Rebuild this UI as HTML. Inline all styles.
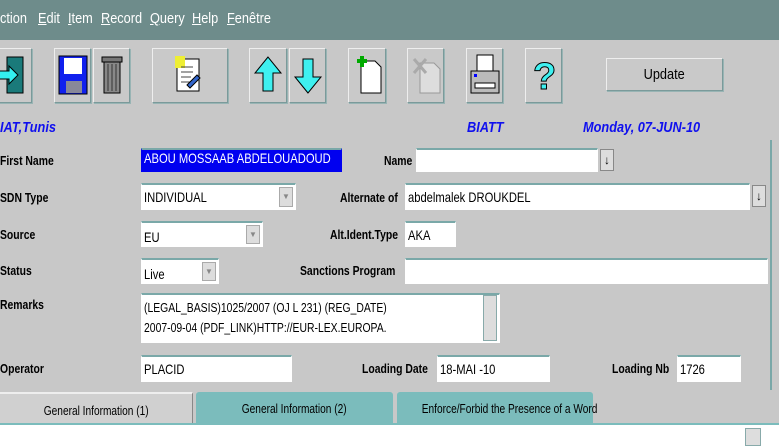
<!DOCTYPE html>
<html><head><style>
*{margin:0;padding:0;box-sizing:border-box}
html,body{width:779px;height:446px;overflow:hidden}
body{background:#c8c8c8;font-family:"Liberation Sans",sans-serif;position:relative}
.a{position:absolute}
.menu{left:0;top:0;width:779px;height:40px;background:#6e8c8b}
.menu span{position:absolute;top:10px;font-size:15px;color:#fff;transform:scaleX(.85);transform-origin:left}
.btn{position:absolute;top:48px;height:55px;background:#c9c9c9;border:1px solid #eee;border-right-color:#7a9a9a;border-bottom-color:#7a9a9a;box-shadow:1px 1px 0 #98b4b4}
.lbl{position:absolute;font-size:13px;font-weight:bold;color:#000;transform:scaleX(.8);transform-origin:left;white-space:nowrap}
.f{position:absolute;background:#fff;border:1px solid #fff;border-top:2px solid #7aa8a8;font-size:14px;padding-left:2px;white-space:nowrap;overflow:hidden}
.f span{display:inline-block;transform:scaleX(.8);transform-origin:left}
.dd{position:absolute;top:2px;right:2px;width:14px;bottom:2px;background:#ddd;border:1px solid #aaa;color:#888;font-size:8px;text-align:center;line-height:18px}
.blue{position:absolute;top:119px;color:#1010ee;font-weight:bold;font-style:italic;font-size:15px;transform:scaleX(.85);transform-origin:left;white-space:nowrap}
.tab{position:absolute;top:392px;height:31px;font-size:13px;text-align:center;line-height:34px;white-space:nowrap;overflow:visible}
.tab span{display:inline-block;transform:scaleX(.78);white-space:nowrap}
.lov{position:absolute;width:14px;height:22px;background:#ddd;border:1px solid #888;font-size:12px;text-align:center;line-height:20px;font-weight:bold}
</style></head><body>
<div class="a menu">
<span style="left:0">ction</span><span style="left:38px"><u>E</u>dit</span><span style="left:68px"><u>I</u>tem</span><span style="left:101px"><u>R</u>ecord</span><span style="left:150px"><u>Q</u>uery</span><span style="left:192px"><u>H</u>elp</span><span style="left:227px"><u>F</u>enêtre</span>
</div>
<div class="btn" style="left:-2px;width:34px"><svg width="32" height="52" viewBox="0 0 32 52"><rect x="8" y="8" width="16" height="36" fill="#1a7a7a" stroke="#000"/><path d="M0 22h10v-5l9 9-9 9v-5H0z" fill="#3ee" stroke="#000"/></svg></div>
<div class="btn" style="left:54px;width:37px"><svg width="36" height="52" viewBox="0 0 36 52"><rect x="4" y="7" width="28" height="38" fill="#1020ee" stroke="#000"/><rect x="9" y="9" width="18" height="16" fill="#fff"/><rect x="11" y="32" width="16" height="12" fill="#889"/></svg></div>
<div class="btn" style="left:93px;width:37px"><svg width="36" height="52" viewBox="0 0 36 52"><rect x="10" y="12" width="16" height="32" fill="#888" stroke="#000"/><rect x="8" y="8" width="20" height="5" fill="#777" stroke="#000"/><path d="M14 15v27M18 15v27M22 15v27" stroke="#333"/></svg></div>
<div class="btn" style="left:152px;width:76px"><svg width="76" height="52" viewBox="0 0 76 52"><rect x="24" y="10" width="22" height="32" fill="#fff" stroke="#000"/><rect x="22" y="7" width="10" height="12" fill="#ee3"/><path d="M28 18h12M28 23h12M28 28h10M28 33h12" stroke="#444"/><path d="M34 36l10-10 3 3-10 10z" fill="#36c" stroke="#000"/></svg></div>
<div class="btn" style="left:249px;width:38px"><svg width="36" height="52" viewBox="0 0 36 52"><path d="M18 8L5 24h8v18h10V24h8z" fill="#3ef0f0" stroke="#000"/></svg></div>
<div class="btn" style="left:289px;width:37px"><svg width="36" height="52" viewBox="0 0 36 52"><path d="M18 44L5 28h8V10h10v18h8z" fill="#3ef0f0" stroke="#000"/></svg></div>
<div class="btn" style="left:348px;width:38px"><svg width="36" height="52" viewBox="0 0 36 52"><path d="M12 12h14l6 6v26H12z" fill="#fff" stroke="#000"/><path d="M8 12h10M13 7v11" stroke="#0a0" stroke-width="4"/></svg></div>
<div class="btn" style="left:407px;width:37px"><svg width="36" height="52" viewBox="0 0 36 52"><path d="M12 14h14l6 6v24H12z" fill="#ddd" stroke="#999"/><path d="M6 10l12 14M18 10L6 24" stroke="#aaa" stroke-width="3"/></svg></div>
<div class="btn" style="left:466px;width:37px"><svg width="36" height="52" viewBox="0 0 36 52"><rect x="10" y="6" width="16" height="16" fill="#fff" stroke="#000"/><rect x="4" y="22" width="28" height="22" fill="#bbb" stroke="#000"/><rect x="8" y="34" width="20" height="5" fill="#fff" stroke="#000"/><rect x="7" y="25" width="3" height="3" fill="#00f"/></svg></div>
<div class="btn" style="left:525px;width:37px"><svg width="36" height="52" viewBox="0 0 36 52"><text x="7" y="40" font-size="38" font-family="Liberation Sans" font-weight="bold" fill="#3ef0f0" stroke="#000" stroke-width="1">?</text></svg></div>
<div class="btn" style="left:606px;top:58px;width:117px;height:33px;text-align:center;line-height:31px;font-size:15px"><span style="display:inline-block;transform:scaleX(.85)">Update</span></div>
<div class="blue" style="left:0">IAT,Tunis</div>
<div class="blue" style="left:467px">BIATT</div>
<div class="blue" style="left:583px">Monday, 07-JUN-10</div>
<div class="a" style="left:770px;top:140px;width:2px;height:250px;background:#7aa8a8"></div>

<div class="lbl" style="left:0;top:153px">First Name</div>
<div class="f" style="left:141px;top:148px;width:201px;height:24px;background:#0000f0;color:#fff;border-color:#0000f0;border-top-color:#7aa8a8"><span>ABOU MOSSAAB ABDELOUADOUD</span></div>
<div class="lbl" style="left:384px;top:153px">Name</div>
<div class="f" style="left:416px;top:148px;width:182px;height:24px"></div>
<div class="lov" style="left:600px;top:149px">↓</div>

<div class="lbl" style="left:0;top:190px">SDN Type</div>
<div class="f" style="left:141px;top:183px;width:155px;height:27px;line-height:24px"><span>INDIVIDUAL</span><div class="dd">▼</div></div>
<div class="lbl" style="left:340px;top:190px">Alternate of</div>
<div class="f" style="left:405px;top:183px;width:345px;height:27px;line-height:24px"><span>abdelmalek DROUKDEL</span></div>
<div class="lov" style="left:752px;top:185px">↓</div>

<div class="lbl" style="left:0;top:227px">Source</div>
<div class="f" style="left:141px;top:221px;width:122px;height:26px;line-height:28px"><span>EU</span><div class="dd">▼</div></div>
<div class="lbl" style="left:330px;top:227px">Alt.Ident.Type</div>
<div class="f" style="left:405px;top:221px;width:51px;height:26px;line-height:24px"><span>AKA</span></div>

<div class="lbl" style="left:0;top:263px">Status</div>
<div class="f" style="left:141px;top:258px;width:78px;height:26px;line-height:28px"><span>Live</span><div class="dd">▼</div></div>
<div class="lbl" style="left:300px;top:263px">Sanctions Program</div>
<div class="f" style="left:405px;top:258px;width:363px;height:26px"></div>

<div class="lbl" style="left:0;top:297px">Remarks</div>
<div class="f" style="left:141px;top:293px;width:359px;height:50px;font-size:13px;line-height:20px;padding-top:3px"><span>(LEGAL_BASIS)1025/2007 (OJ L 231) (REG_DATE)</span><br><span>2007-09-04 (PDF_LINK)HTTP://EUR-LEX.EUROPA.</span>
<div class="a" style="left:341px;top:0;width:14px;height:46px;background:#ddd;border:1px solid #8aa"></div></div>

<div class="lbl" style="left:0;top:361px">Operator</div>
<div class="f" style="left:141px;top:355px;width:151px;height:27px;line-height:24px"><span>PLACID</span></div>
<div class="lbl" style="left:362px;top:361px">Loading Date</div>
<div class="f" style="left:437px;top:355px;width:113px;height:27px;line-height:24px"><span>18-MAI -10</span></div>
<div class="lbl" style="left:612px;top:361px">Loading Nb</div>
<div class="f" style="left:677px;top:355px;width:64px;height:27px;line-height:24px"><span>1726</span></div>

<div class="tab" style="left:0;width:193px;background:#d0d0d0;border-top:2px solid #eee;border-right:1px solid #888"><span>General Information (1)</span></div>
<div class="tab" style="left:196px;width:197px;background:#7bbcbc;border-radius:3px 3px 0 0"><span>General Information (2)</span></div>
<div class="tab" style="left:397px;width:196px;background:#7bbcbc;border-radius:3px 3px 0 0"><span>Enforce/Forbid the Presence of a Word</span></div>
<div class="a" style="left:0;top:423px;width:779px;height:23px;background:#fff;border-top:2px solid #7bbcbc"></div>
<div class="a" style="left:745px;top:428px;width:16px;height:18px;background:#ddd;border:1px solid #8aa"></div>
</body></html>
